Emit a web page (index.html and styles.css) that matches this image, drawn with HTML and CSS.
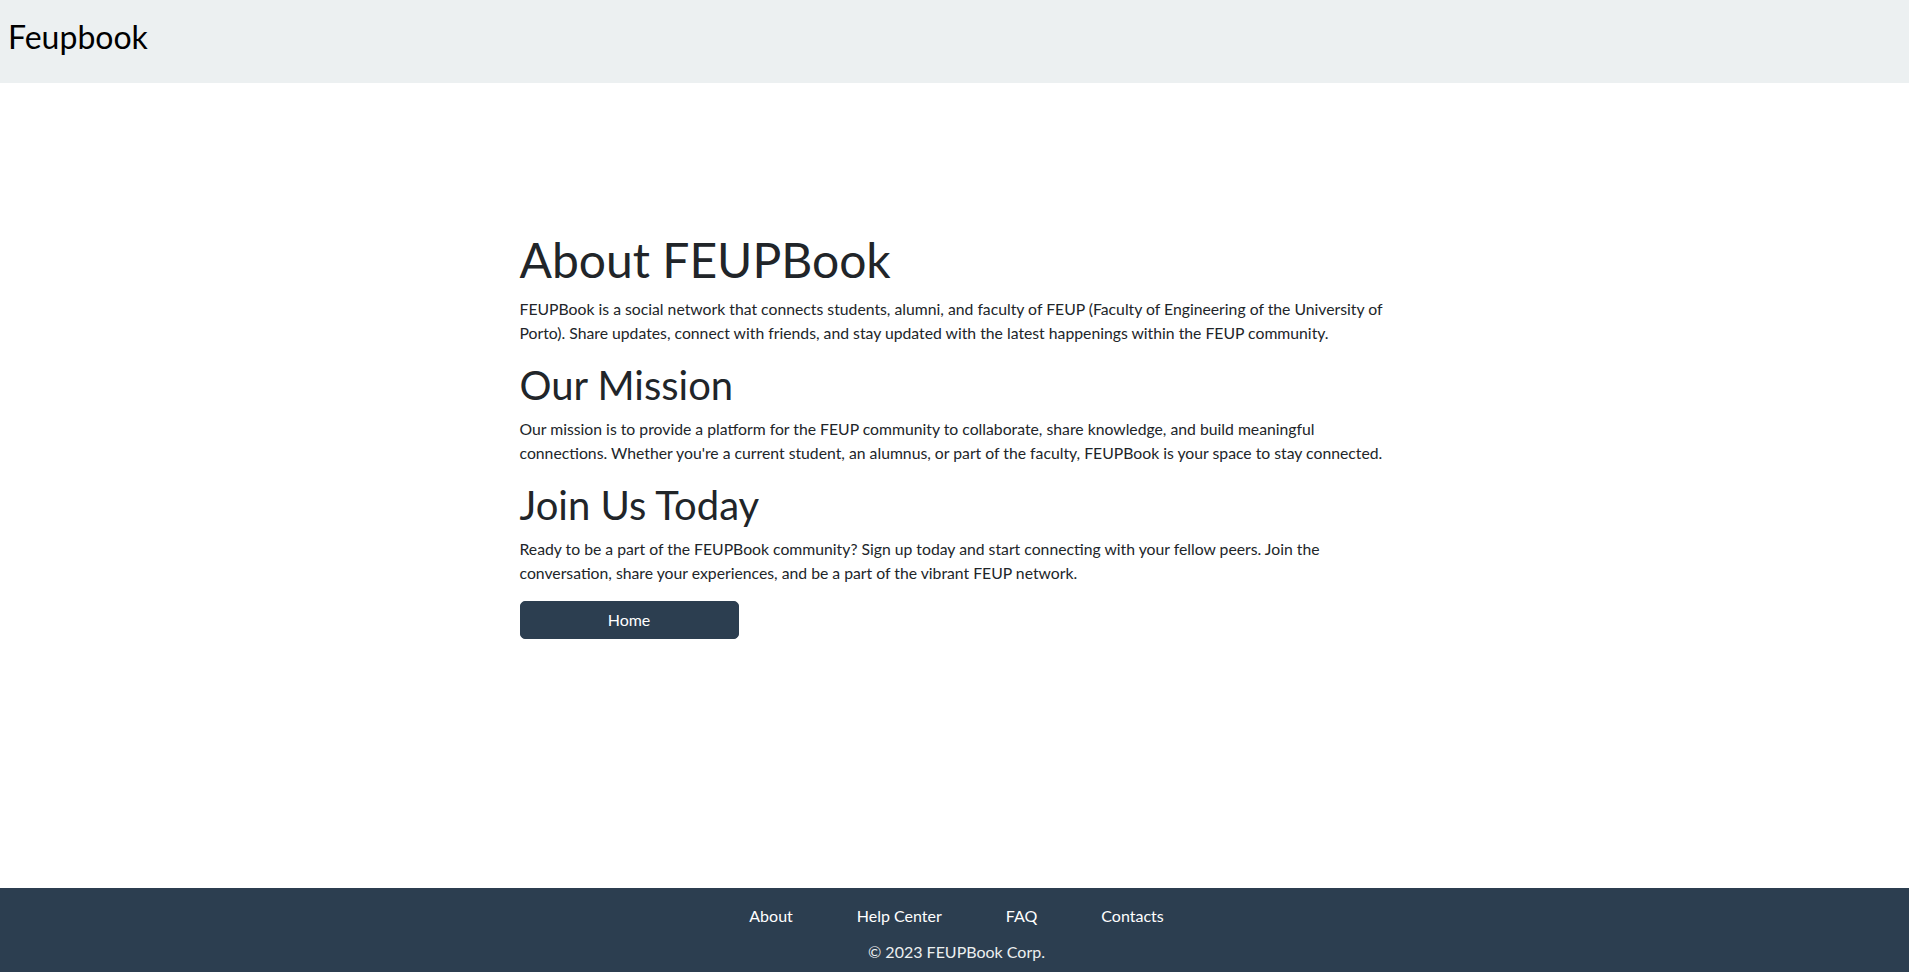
FILE: index.html
```html
<!DOCTYPE html>
<html lang="en">
<head>
<meta charset="utf-8">
<title>About - Feupbook</title>
<link rel="stylesheet" href="styles.css">
</head>
<body>
<header class="topbar">
  <h1 class="brand">Feupbook</h1>
</header>
<main class="about">
  <section class="about-inner">
    <h1 class="title">About FEUPBook</h1>
    <p class="text">FEUPBook is a social network that connects students, alumni, and faculty of FEUP (Faculty of Engineering of the University of Porto). Share updates, connect with friends, and stay updated with the latest happenings within the FEUP community.</p>
    <h2 class="subtitle">Our Mission</h2>
    <p class="text">Our mission is to provide a platform for the FEUP community to collaborate, share knowledge, and build meaningful connections. Whether you're a current student, an alumnus, or part of the faculty, FEUPBook is your space to stay connected.</p>
    <h2 class="subtitle">Join Us Today</h2>
    <p class="text">Ready to be a part of the FEUPBook community? Sign up today and start connecting with your fellow peers. Join the conversation, share your experiences, and be a part of the vibrant FEUP network.</p>
    <a class="btn-home" href="#">Home</a>
  </section>
</main>
<footer class="footer">
  <nav class="footer-links">
    <a href="#">About</a>
    <a href="#">Help Center</a>
    <a href="#">FAQ</a>
    <a href="#">Contacts</a>
  </nav>
  <p class="copy">© 2023 FEUPBook Corp.</p>
</footer>
</body>
</html>
```

FILE: styles.css
```css
* { box-sizing: border-box; }
html, body { height: 100%; }
body {
  margin: 0;
  font-family: Lato, "Open Sans", "Liberation Sans", sans-serif;
  font-size: 16px;
  line-height: 1.5;
  color: #212529;
  background: #fff;
  display: flex;
  flex-direction: column;
}
.topbar {
  background: #ecf0f1;
  height: 83px;
  display: flex;
  align-items: center;
  padding: 0 8px 8px;
  flex: none;
}
.brand {
  margin: 0;
  font-size: 32px;
  font-weight: 400;
  line-height: 1.2;
  color: #000;
}
.about {
  flex: 1;
  display: flex;
  justify-content: center;
  padding-top: 148px;
}
.about-inner {
  width: 870px;
}
.title {
  margin: 0 0 8px;
  font-size: 48px;
  font-weight: 400;
  line-height: 1.2;
}
.subtitle {
  margin: 0 0 8px;
  font-size: 40px;
  font-weight: 400;
  line-height: 1.2;
}
.text {
  margin: 0 0 16px;
  font-size: 15.75px;
  line-height: 24px;
}
.btn-home {
  display: block;
  width: 219px;
  padding: 6px 12px;
  border: 1px solid #2c3e50;
  border-radius: 5px;
  background: #2c3e50;
  color: #fff;
  text-align: center;
  text-decoration: none;
  line-height: 24px;
}
.footer {
  flex: none;
  background: #2c3e50;
  color: #ecf0f1;
  padding: 16px 0 8px 4px;
  text-align: center;
}
.footer-links {
  display: flex;
  justify-content: center;
  gap: 64px;
  margin-bottom: 12px;
}
.footer-links a {
  color: #fff;
  text-decoration: none;
}
.copy {
  margin: 0;
}
```
